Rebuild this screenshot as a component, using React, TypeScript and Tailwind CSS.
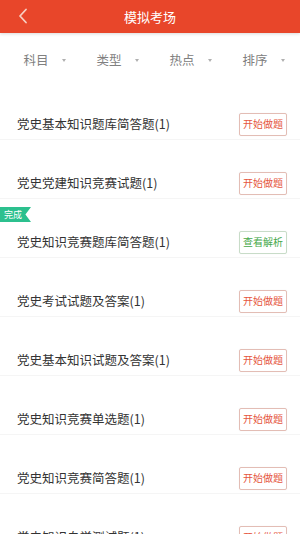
import React from "react";

const rows: { title: string; done?: boolean }[] = [
  { title: "党史基本知识题库简答题(1)" },
  { title: "党史党建知识竞赛试题(1)" },
  { title: "党史知识竞赛题库简答题(1)", done: true },
  { title: "党史考试试题及答案(1)" },
  { title: "党史基本知识试题及答案(1)" },
  { title: "党史知识竞赛单选题(1)" },
  { title: "党史知识竞赛简答题(1)" },
  { title: "党史知识自学测试题(1)" },
];

const filters = ["科目", "类型", "热点", "排序"];

export default function App() {
  return (
    <div
      className="w-[300px] h-[534px] overflow-hidden bg-white relative"
      style={{ fontFamily: '"Noto Sans CJK SC", "Noto Sans", sans-serif' }}
    >
      <div className="h-[33px] bg-[#e8462a] flex items-center justify-center relative shadow-[0_1px_3px_rgba(0,0,0,0.15)] z-10">
        <svg
          className="absolute left-[17px] top-[8px]"
          width="12"
          height="16"
          viewBox="0 0 12 16"
        >
          <polyline
            points="9,1.5 3,8 9,14.5"
            fill="none"
            stroke="#f7cfc2"
            strokeWidth="1.8"
            strokeLinecap="round"
            strokeLinejoin="round"
          />
        </svg>
        <span className="text-white text-[13px] leading-none">模拟考场</span>
      </div>
      <div className="h-[48px] pl-[8px] grid grid-cols-4 items-center pt-[6px]">
        {filters.map((f) => (
          <div key={f} className="flex items-center justify-center gap-[13px]">
            <span className="text-[12.5px] text-[#808080] leading-none">{f}</span>
            <span className="w-0 h-0 border-l-[2.5px] border-r-[2.5px] border-t-[3px] border-l-transparent border-r-transparent border-t-[#b0b0b0]" />
          </div>
        ))}
      </div>
      <div className="flex flex-col">
        {rows.map((r, i) => (
          <div
            key={i}
            className="h-[59px] shrink-0 relative flex items-center justify-between pt-[28px] pl-[17px] pr-[13px] border-b border-[#f5f5f5]"
          >
            {r.done && (
              <div
                className="absolute left-0 top-[8px] h-[15px] w-[31px] bg-[#2cc08e] flex items-center pl-[4px]"
                style={{
                  clipPath:
                    "polygon(0 0, 100% 0, 82% 50%, 100% 100%, 0 100%)",
                }}
              >
                <span className="text-white text-[9px] leading-none">完成</span>
              </div>
            )}
            <span className="text-[12.5px] text-[#333333] leading-none">
              {r.title}
            </span>
            {r.done ? (
              <div className="h-[23px] w-[48px] border border-[#c8dcc8] rounded-[2px] flex items-center justify-center shadow-[0_0_1px_rgba(0,0,0,0.1)]">
                <span className="text-[10px] text-[#46a84a] leading-none">查看解析</span>
              </div>
            ) : (
              <div className="h-[23px] w-[48px] border border-[#e3bdb5] rounded-[2px] flex items-center justify-center shadow-[0_0_1px_rgba(0,0,0,0.1)]">
                <span className="text-[10px] text-[#e5553d] leading-none">开始做题</span>
              </div>
            )}
          </div>
        ))}
      </div>
    </div>
  );
}
